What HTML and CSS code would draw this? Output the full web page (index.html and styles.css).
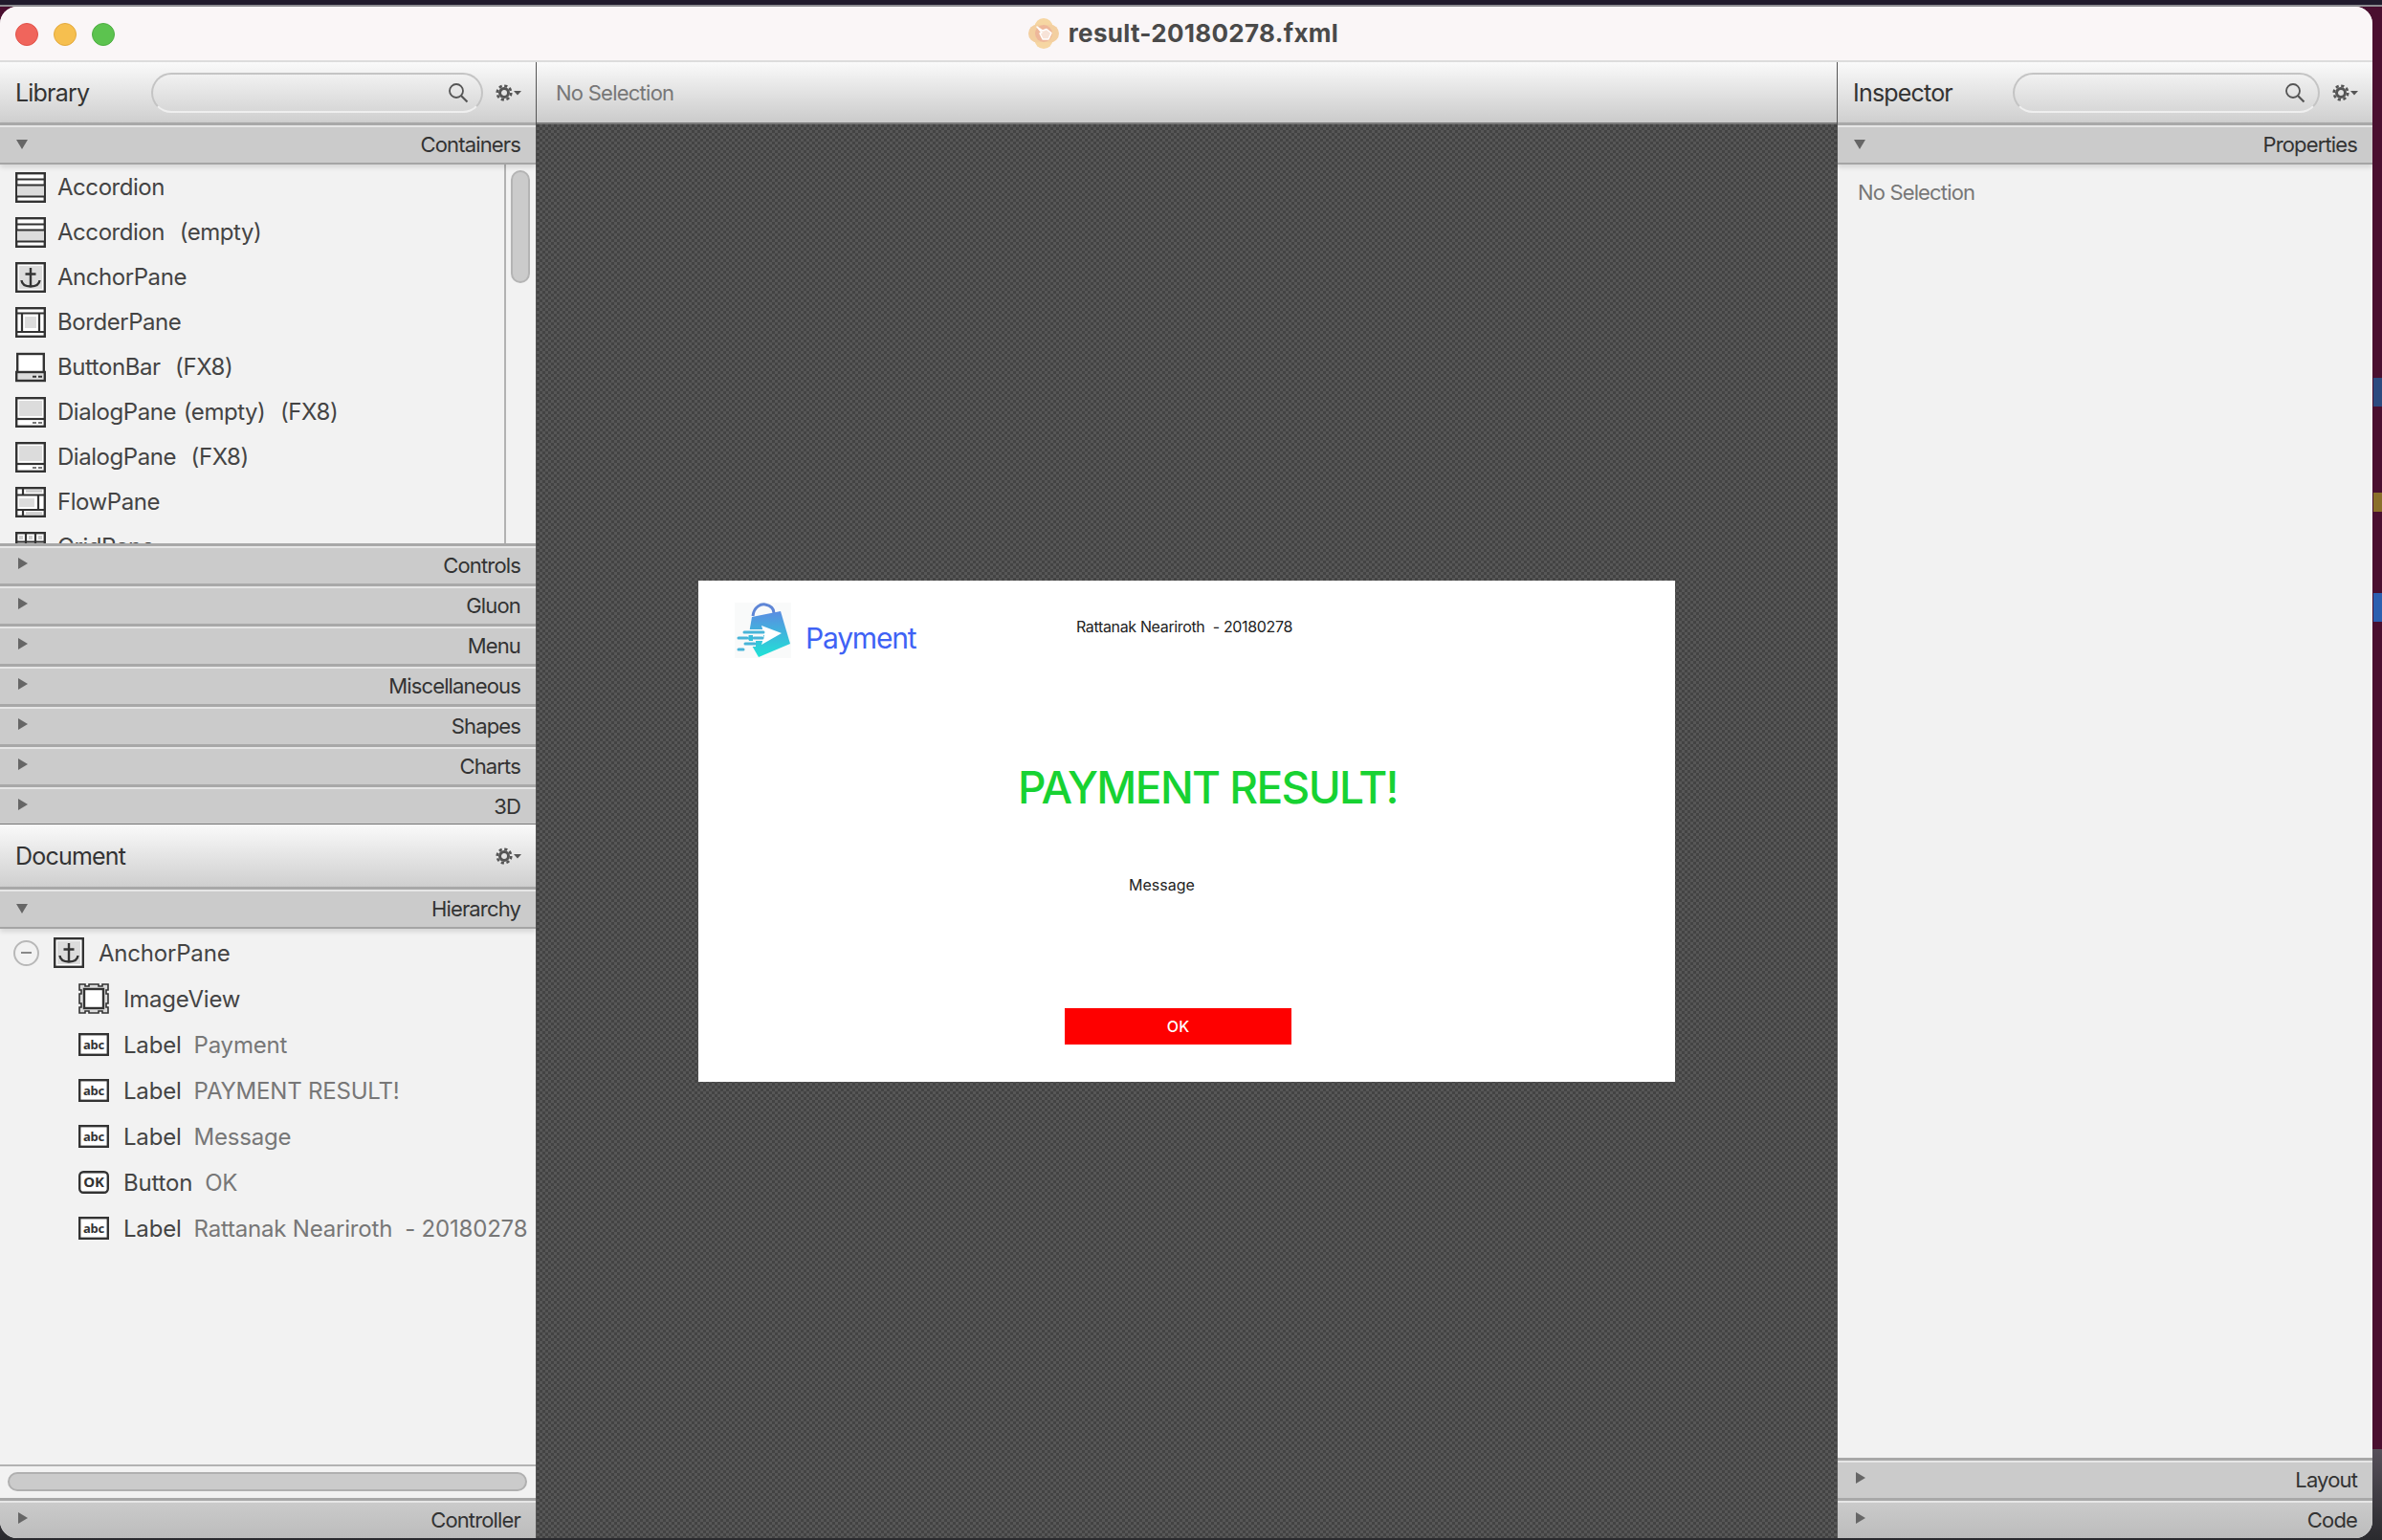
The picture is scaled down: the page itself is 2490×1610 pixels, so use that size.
FILE: index.html
```html
<!DOCTYPE html>
<html lang="en">
<head>
<meta charset="UTF-8">
<meta name="viewport" content="width=device-width, initial-scale=1.0">
<title>result-20180278.fxml</title>
<link rel="stylesheet" href="styles.css">
</head>
<body>
<svg class="defs" width="0" height="0">
    <defs>
        <linearGradient id="bagGrad" x1="0" y1="0" x2="0" y2="1">
            <stop offset="0" stop-color="#5b8ce2"/>
            <stop offset="1" stop-color="#1fe3d6"/>
        </linearGradient>
        <symbol id="ic-accordion" viewBox="0 0 32 32">
            <rect x="1.2" y="1.2" width="29.6" height="29.6" fill="#fff" stroke="#333" stroke-width="2.4"/>
            <rect x="2" y="14" width="28" height="11" fill="#dcdcdc"/>
            <path d="M1 7.5H31M1 13.5H31M1 25.5H31" stroke="#333" stroke-width="2.2" fill="none"/>
        </symbol>
        <symbol id="ic-anchor" viewBox="0 0 32 32">
            <rect x="1.2" y="1.2" width="29.6" height="29.6" fill="#fff" stroke="#333" stroke-width="2.4"/>
            <rect x="4" y="4" width="24" height="24" fill="#dcdcdc"/>
            <path d="M16 6V25M10.5 12.5H21.5M6.5 19C7 24 11 25.5 16 25.5S25 24 25.500 19" stroke="#333" stroke-width="2.4" fill="none"/>
        </symbol>
        <symbol id="ic-border" viewBox="0 0 32 32">
            <rect x="1.2" y="1.2" width="29.6" height="29.600" fill="#fff" stroke="#333" stroke-width="2.4"/>
            <rect x="10" y="10" width="12" height="12" fill="#dcdcdc"/>
            <path d="M1 6.500H31M1 26H31M7 6.500V26M25 6.500V26" stroke="#333" stroke-width="2.2" fill="none"/>
        </symbol>
        <symbol id="ic-buttonbar" viewBox="0 0 32 32">
            <rect x="2.200" y="2" width="27.600" height="21" fill="#fff" stroke="#333" stroke-width="2.400"/>
            <rect x="1.200" y="21" width="29.600" height="9" fill="#dcdcdc" stroke="#333" stroke-width="2.400"/>
            <path d="M18 25.800H22M24 25.800H28" stroke="#333" stroke-width="2"/>
        </symbol>
        <symbol id="ic-dialog" viewBox="0 0 32 32">
            <rect x="1.200" y="1.200" width="29.600" height="29.600" fill="#fff" stroke="#333" stroke-width="2.400"/>
            <rect x="4" y="4" width="24" height="16" fill="#dcdcdc"/>
            <path d="M1 23H31" stroke="#333" stroke-width="2.200"/>
            <path d="M18 27H22M24 27H28" stroke="#777" stroke-width="2"/>
        </symbol>
        <symbol id="ic-flow" viewBox="0 0 32 32">
            <rect x="1.200" y="1.200" width="29.600" height="29.600" fill="#fff" stroke="#333" stroke-width="2.400"/>
            <rect x="4" y="12" width="16" height="9" fill="#dcdcdc"/>
            <path d="M11 4.500H28M11 27.500H28" stroke="#ccc" stroke-width="2.400"/>
            <path d="M1 8.500H31M1 24H31M8 1V8.500M8 24V31M24 8.500V24" stroke="#333" stroke-width="2.200" fill="none"/>
        </symbol>
        <symbol id="ic-grid" viewBox="0 0 32 32">
            <rect x="1.200" y="1.200" width="29.600" height="29.600" fill="#fff" stroke="#333" stroke-width="2.400"/>
            <path d="M1 10.500H31M1 21H31M11 1V31M21 1V31" stroke="#333" stroke-width="2.200" fill="none"/>
            <path d="M4 6H8M14 6H18M24 6H28" stroke="#ccc" stroke-width="4"/>
        </symbol>
        <symbol id="ic-image" viewBox="0 0 32 32">
            <path d="M1 1H7V3H11V1H21V3H25V1H31V7H29V11H31V21H29V25H31V31H25V29H21V31H11V29H7V31H1V25H3V21H1V11H3V7H1Z" fill="#dcdcdc" stroke="#333" stroke-width="1.600"/>
            <rect x="6" y="6" width="20" height="20" fill="#fff" stroke="#333" stroke-width="2.400"/>
        </symbol>
        <symbol id="ic-label" viewBox="0 0 32 24">
            <rect x="1.200" y="1.200" width="29.600" height="21.600" fill="#fff" stroke="#333" stroke-width="2.400"/>
            <text x="16" y="16.500" class="ic-text" text-anchor="middle">abc</text>
        </symbol>
        <symbol id="ic-ok" viewBox="0 0 32 24">
            <rect x="1.200" y="1.200" width="29.600" height="21.600" rx="4" fill="#fff" stroke="#333" stroke-width="2.400"/>
            <text x="16" y="17" class="ic-text ic-text-ok" text-anchor="middle">OK</text>
        </symbol>
        <symbol id="ic-search" viewBox="0 0 22 22">
            <circle cx="9" cy="9" r="7" fill="none" stroke="#555" stroke-width="1.800"/>
            <path d="M14 14L20.500 20.500" stroke="#555" stroke-width="2.200"/>
        </symbol>
        <symbol id="ic-gear" viewBox="0 0 28 18">
            <circle cx="9" cy="9" r="4.500" fill="none" stroke="#555" stroke-width="3"/>
            <circle cx="9" cy="9" r="7.300" fill="none" stroke="#555" stroke-width="2.600" stroke-dasharray="3.200 2.530"/>
            <path d="M19 7H27L23 11.500Z" fill="#555"/>
        </symbol>
    </defs>
</svg>

<div class="desktop-bits">
    <span class="bit bit-blue"></span>
    <span class="bit bit-yellow"></span>
    <span class="bit bit-blue2"></span>
</div>

<div class="window">
    <div class="titlebar">
        <div class="lights">
            <span class="light red"></span>
            <span class="light yellow"></span>
            <span class="light green"></span>
        </div>
        <div class="doc-title">
            <svg class="doc-icon" viewBox="0 0 32 32" width="32" height="32">
                <circle cx="16" cy="9.500" r="9.500" fill="#f6d6a2"/>
                <circle cx="16" cy="22.500" r="9.500" fill="#f6d6a2"/>
                <circle cx="9.500" cy="16" r="9.500" fill="#f3cfa0"/>
                <circle cx="22.500" cy="16" r="9.500" fill="#f3cfa0"/>
                <circle cx="16" cy="16" r="9" fill="#eeb79a"/>
                <path d="M9 9L15 13L19 11.500L24 15.500L21 22L15 22L12 16L14 15Z" fill="#f7e3d8" stroke="#fff" stroke-width="1.500" stroke-linejoin="round"/>
            </svg>
            <span>result-20180278.fxml</span>
        </div>
    </div>

    <div class="main">
        <!-- left column -->
        <div class="side left">
            <div class="pane-head">
                <span class="pane-title">Library</span>
                <div class="search">
                    <svg class="search-icon"><use href="#ic-search"/></svg>
                </div>
                <svg class="gear"><use href="#ic-gear"/></svg>
            </div>
            <div class="sec-head open"><span class="tri-down"></span><span>Containers</span></div>
            <div class="lib-body">
                <div class="lib-list">
                    <div class="lib-row"><svg class="ic"><use href="#ic-accordion"/></svg><span>Accordion</span></div>
                    <div class="lib-row"><svg class="ic"><use href="#ic-accordion"/></svg><span>Accordion&nbsp; (empty)</span></div>
                    <div class="lib-row"><svg class="ic"><use href="#ic-anchor"/></svg><span>AnchorPane</span></div>
                    <div class="lib-row"><svg class="ic"><use href="#ic-border"/></svg><span>BorderPane</span></div>
                    <div class="lib-row"><svg class="ic"><use href="#ic-buttonbar"/></svg><span>ButtonBar&nbsp; (FX8)</span></div>
                    <div class="lib-row"><svg class="ic"><use href="#ic-dialog"/></svg><span>DialogPane (empty)&nbsp; (FX8)</span></div>
                    <div class="lib-row"><svg class="ic"><use href="#ic-dialog"/></svg><span>DialogPane&nbsp; (FX8)</span></div>
                    <div class="lib-row"><svg class="ic"><use href="#ic-flow"/></svg><span>FlowPane</span></div>
                    <div class="lib-row"><svg class="ic"><use href="#ic-grid"/></svg><span>GridPane</span></div>
                </div>
                <div class="vscroll"><div class="vthumb"></div></div>
            </div>
            <div class="sec-head"><span class="tri-right"></span><span>Controls</span></div>
            <div class="sec-head"><span class="tri-right"></span><span>Gluon</span></div>
            <div class="sec-head"><span class="tri-right"></span><span>Menu</span></div>
            <div class="sec-head"><span class="tri-right"></span><span>Miscellaneous</span></div>
            <div class="sec-head"><span class="tri-right"></span><span>Shapes</span></div>
            <div class="sec-head"><span class="tri-right"></span><span>Charts</span></div>
            <div class="sec-head last"><span class="tri-right"></span><span>3D</span></div>

            <div class="pane-head doc-head">
                <span class="pane-title">Document</span>
                <svg class="gear"><use href="#ic-gear"/></svg>
            </div>
            <div class="sec-head open"><span class="tri-down"></span><span>Hierarchy</span></div>
            <div class="tree">
                <div class="tree-row root">
                    <span class="collapse"></span>
                    <svg class="ic"><use href="#ic-anchor"/></svg>
                    <span>AnchorPane</span>
                </div>
                <div class="tree-row"><svg class="ic"><use href="#ic-image"/></svg><span>ImageView</span></div>
                <div class="tree-row"><svg class="ic-sm"><use href="#ic-label"/></svg><span>Label</span><span class="val">Payment</span></div>
                <div class="tree-row"><svg class="ic-sm"><use href="#ic-label"/></svg><span>Label</span><span class="val">PAYMENT RESULT!</span></div>
                <div class="tree-row"><svg class="ic-sm"><use href="#ic-label"/></svg><span>Label</span><span class="val">Message</span></div>
                <div class="tree-row"><svg class="ic-sm"><use href="#ic-ok"/></svg><span>Button</span><span class="val">OK</span></div>
                <div class="tree-row"><svg class="ic-sm"><use href="#ic-label"/></svg><span>Label</span><span class="val">Rattanak Neariroth&nbsp; - 20180278</span></div>
            </div>
            <div class="hscroll"><div class="hthumb"></div></div>
            <div class="sec-head foot"><span class="tri-right"></span><span>Controller</span></div>
        </div>

        <!-- center canvas -->
        <div class="center">
            <div class="center-bar">No Selection</div>
            <div class="canvas">
                <div class="card">
                    <div class="card-top">
                        <div class="brand">
                            <svg class="logo" viewBox="0 0 59 58" width="59" height="58">
                                <rect width="59" height="58" fill="#f9fafa"/>
                                <path d="M19 14C20 4 28 1 32 2C37 3 41 6 41 11" fill="none" stroke="#5f86d6" stroke-width="3"/>
                                <path d="M18 15L48 9L58 43L25 57L14 38Z" fill="url(#bagGrad)"/>
                                <path d="M28 24L49 32L28 44L31 34Z" fill="#fff"/>
                                <path d="M9 31H31M2 37H14M19 37H30M9 43H22M2 49H10" stroke="#f9fafa" stroke-width="6" fill="none"/>
                                <path d="M10 31H30M4 37H13M20 37H29M11 43H21M4 49H9" stroke="#48b4d8" stroke-width="3" stroke-linecap="round" fill="none"/>
                            </svg>
                            <span class="brand-name">Payment</span>
                        </div>
                        <span class="student">Rattanak Neariroth&nbsp; - 20180278</span>
                    </div>
                    <div class="result">PAYMENT RESULT!</div>
                    <div class="message">Message</div>
                    <div class="ok-btn">OK</div>
                </div>
            </div>
        </div>

        <!-- right column -->
        <div class="side right">
            <div class="pane-head">
                <span class="pane-title">Inspector</span>
                <div class="search">
                    <svg class="search-icon"><use href="#ic-search"/></svg>
                </div>
                <svg class="gear"><use href="#ic-gear"/></svg>
            </div>
            <div class="sec-head open"><span class="tri-down"></span><span>Properties</span></div>
            <div class="props">No Selection</div>
            <div class="sec-head"><span class="tri-right"></span><span>Layout</span></div>
            <div class="sec-head foot"><span class="tri-right"></span><span>Code</span></div>
        </div>
    </div>
</div>
</body>
</html>
```

FILE: styles.css
```css
* {
    box-sizing: border-box;
}
html, body {
    margin: 0;
    height: 100%;
}
body {
    width: 2490px;
    height: 1610px;
    overflow: hidden;
    position: relative;
    background: linear-gradient(#201a2c 0, #201a2c 5px, #8c8c90 5px, #8c8c90 7px, #4a0f30 7px, #4a0f30 1515px, #56505a 1515px, #2a2a2e 1610px);
    font-family: Inter, "Noto Sans", sans-serif;
    color: #444;
}
.defs {
    position: absolute;
}
.ic-text {
    font-family: "Noto Sans", sans-serif;
    font-size: 13px;
    font-weight: 700;
    fill: #333;
}
.ic-text-ok {
    font-size: 15px;
}

.desktop-bits .bit {
    position: absolute;
    left: 2481px;
    width: 9px;
}
.bit-blue { top: 395px; height: 30px; background: #2c4a80; }
.bit-yellow { top: 515px; height: 20px; background: #8a6f2a; }
.bit-blue2 { top: 620px; height: 30px; background: #2c5fb0; }

.window {
    position: absolute;
    left: 0;
    top: 7px;
    width: 2480px;
    height: 1601px;
    border-radius: 18px;
    overflow: hidden;
    background: #f2f2f2;
    display: flex;
    flex-direction: column;
}

/* title bar */
.titlebar {
    height: 58px;
    flex: none;
    background: #faf6f7;
    border-bottom: 2px solid #dcdcdc;
    position: relative;
    display: flex;
    align-items: center;
    justify-content: center;
}
.lights {
    position: absolute;
    left: 16px;
    top: 17px;
    display: flex;
    gap: 16px;
}
.light {
    width: 24px;
    height: 24px;
    border-radius: 50%;
}
.red { background: #f0655c; border: 1px solid #e0524a; }
.yellow { background: #f6bf4f; border: 1px solid #e2a93e; }
.green { background: #5cc34f; border: 1px solid #4eae43; }
.doc-title {
    display: flex;
    align-items: center;
    gap: 10px;
    font-size: 26px;
    font-weight: 700;
    letter-spacing: 0.3px;
    color: #4a4a4a;
    margin-left: -6px;
    margin-top: -1px;
}
.doc-icon {
    flex: none;
}

.main {
    flex: 1;
    display: flex;
    min-height: 0;
}
.side {
    flex: none;
    display: flex;
    flex-direction: column;
}
.side.left {
    width: 560px;
}
.side.right {
    flex: 1;
    min-width: 0;
}

/* panel heads */
.pane-head {
    height: 63px;
    flex: none;
    display: flex;
    align-items: center;
    padding: 0 14px 0 16px;
    background: linear-gradient(#fafafa, #cfcfcf);
}
.pane-title {
    font-size: 25px;
    color: #333;
    letter-spacing: -0.8px;
}
.search {
    flex: none;
    margin-left: auto;
    width: 347px;
    height: 42px;
    border-radius: 21px;
    border: 2px solid #c4c4c4;
    border-bottom-color: #efefef;
    position: relative;
}
.search-icon {
    position: absolute;
    right: 13px;
    top: 8px;
    width: 22px;
    height: 22px;
}
.gear {
    flex: none;
    width: 28px;
    height: 18px;
    margin-left: 13px;
}
.doc-head {
    height: 65px;
}
.doc-head .gear {
    margin-left: auto;
}
.right .pane-head {
    padding-right: 14px;
}
.right .search {
    width: 321px;
}

/* section heads */
.sec-head {
    height: 42px;
    flex: none;
    display: flex;
    align-items: center;
    justify-content: space-between;
    padding: 1px 16px 0 17px;
    font-size: 22px;
    letter-spacing: -0.85px;
    color: #333;
    background: #cbcbcb;
    border-top: 3px solid #a8a8a8;
    box-shadow: inset 0 2px 0 #e6e6e6;
}
.sec-head.open {
    height: 44px;
    border-bottom: 2px solid #a5a5a5;
    position: relative;
    z-index: 1;
    box-shadow: inset 0 2px 0 #e6e6e6, 0 3px 5px rgba(0, 0, 0, 0.12);
}
.sec-head.last {
    border-bottom: 1px solid #777;
}
.sec-head.foot {
    background: linear-gradient(#cbcbcb, #bcbcbc);
}
.tri-down {
    width: 0;
    height: 0;
    border-left: 6px solid transparent;
    border-right: 6px solid transparent;
    border-top: 10px solid #666;
}
.tri-right {
    width: 0;
    height: 0;
    margin-left: 2px;
    margin-bottom: 4px;
    border-top: 6px solid transparent;
    border-bottom: 6px solid transparent;
    border-left: 10px solid #666;
}

/* library list */
.lib-body {
    height: 396px;
    flex: none;
    display: flex;
    overflow: hidden;
    background: #f2f2f2;
}
.lib-list {
    flex: 1;
    padding: 0 0 0 16px;
}
.lib-row {
    height: 47px;
    display: flex;
    align-items: center;
    gap: 12px;
    font-size: 24px;
    letter-spacing: -0.45px;
    word-spacing: 1.5px;
    color: #444;
}
.ic {
    flex: none;
    width: 32px;
    height: 32px;
}
.ic-sm {
    flex: none;
    width: 32px;
    height: 24px;
}
.vscroll {
    flex: none;
    width: 33px;
    border-left: 2px solid #b2b2b2;
    padding: 6px 6px 0 5px;
}
.vthumb {
    width: 20px;
    height: 118px;
    border-radius: 10px;
    background: #cbcbcb;
    border: 2px solid #b4b4b4;
}

/* hierarchy tree */
.tree {
    flex: 1;
    min-height: 0;
    padding: 1px 0 0 82px;
    background: #f2f2f2;
}
.tree-row {
    height: 48px;
    display: flex;
    align-items: center;
    gap: 15px;
    font-size: 24px;
    letter-spacing: -0.2px;
    color: #444;
}
.tree-row .val {
    margin-left: -2px;
    color: #777;
}
.tree-row.root {
    margin-left: -68px;
    gap: 0;
}
.tree-row.root .ic {
    margin: 0 15px;
}
.collapse {
    width: 27px;
    height: 27px;
    flex: none;
    border-radius: 50%;
    border: 2px solid #b8b8b8;
    position: relative;
}
.collapse::after {
    content: "";
    position: absolute;
    left: 6px;
    right: 6px;
    top: 10px;
    height: 2px;
    background: #888;
}
.hscroll {
    height: 35px;
    flex: none;
    padding: 6px 9px 0 8px;
    border-top: 2px solid #b2b2b2;
    background: #f2f2f2;
}
.hthumb {
    height: 20px;
    border-radius: 10px;
    background: #cbcbcb;
    border: 2px solid #b0b0b0;
}

/* center */
.center {
    flex: none;
    width: 1361px;
    display: flex;
    flex-direction: column;
    border-left: 1px solid #555;
    border-right: 1px solid #555;
}
.center-bar {
    height: 65px;
    flex: none;
    display: flex;
    align-items: center;
    padding-left: 20px;
    font-size: 22px;
    letter-spacing: -0.75px;
    color: #777;
    background: linear-gradient(#fafafa, #cbcbcb);
    border-bottom: 2px solid #7a7a7a;
}
.canvas {
    flex: 1;
    background: conic-gradient(#575757 25%, #434343 0 50%, #575757 0 75%, #434343 0) 0 0 / 6px 6px;
    padding: 477px 0 0 169px;
}
.card {
    width: 1021px;
    height: 524px;
    background: #fff;
    display: flex;
    flex-direction: column;
}
.card-top {
    height: 96px;
    flex: none;
    display: flex;
    align-items: flex-start;
}
.brand {
    display: flex;
    align-items: center;
    margin: 23px 0 0 38px;
    gap: 15px;
    width: 357px;
    flex: none;
}
.logo {
    flex: none;
}
.brand-name {
    font-size: 30px;
    color: #3f62f5;
    letter-spacing: -1.2px;
    margin-top: 16px;
}
.student {
    margin-top: 38px;
    font-size: 16px;
    color: #222;
    letter-spacing: -0.35px;
}
.result {
    margin: 92px 0 0 334px;
    font-size: 46px;
    font-weight: 500;
    color: #17d232;
    letter-spacing: -1.6px;
    line-height: 56px;
}
.message {
    margin: 64px 0 0 450px;
    font-size: 16px;
    color: #222;
    line-height: 20px;
}
.ok-btn {
    margin: 119px 0 0 383px;
    width: 237px;
    height: 38px;
    background: #fe0000;
    color: #fff;
    font-size: 16px;
    font-weight: 500;
    display: flex;
    align-items: center;
    justify-content: center;
}

/* inspector */
.props {
    flex: 1;
    padding: 16px 0 0 21px;
    font-size: 22px;
    letter-spacing: -0.85px;
    color: #777;
    background: #f2f2f2;
}
```
